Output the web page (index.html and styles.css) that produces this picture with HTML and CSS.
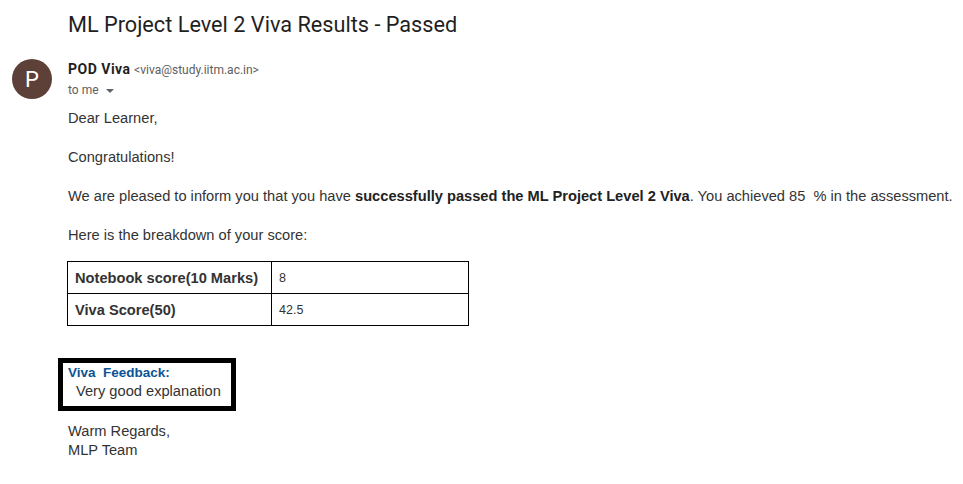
FILE: index.html
```html
<!DOCTYPE html>
<html>
<head>
<meta charset="utf-8">
<link rel="stylesheet" href="styles.css">
</head>
<body>
<div class="page">
  <h1 class="subject">ML Project Level 2 Viva Results - Passed</h1>
  <div class="header">
    <div class="avatar">P</div>
    <div class="meta">
      <div class="from"><span class="name">POD Viva</span> <span class="addr">&lt;viva@study.iitm.ac.in&gt;</span></div>
      <div class="to">to me <svg class="caret" width="10" height="6" viewBox="0 0 10 6"><path d="M1 1 L5 5 L9 1 Z" fill="#5f6368"/></svg></div>
    </div>
  </div>
  <div class="body">
    <p>Dear Learner,</p>
    <p>Congratulations!</p>
    <p>We are pleased to inform you that you have <b>successfully passed the ML Project Level 2 Viva</b>. You achieved 85&nbsp; % in the assessment.</p>
    <p>Here is the breakdown of your score:</p>
    <table class="scores">
      <tr><th>Notebook score(10 Marks)</th><td>8</td></tr>
      <tr><th>Viva Score(50)</th><td>42.5</td></tr>
    </table>
    <div class="feedback">
      <div class="fb-title">Viva&nbsp; Feedback:</div>
      <div class="fb-text">Very good explanation</div>
    </div>
    <div class="sign">Warm Regards,<br>MLP Team</div>
  </div>
</div>
</body>
</html>
```
FILE: styles.css
```css
html, body { margin: 0; padding: 0; background: #fff; }
body { font-family: "Liberation Sans", Arial, sans-serif; color: #333; }
.page { padding: 0 0 0 12px; }
.subject {
  margin: 0;
  padding: 11px 0 0 56px;
  font-family: Roboto, "Liberation Sans", sans-serif;
  font-weight: 400;
  font-size: 21.7px;
  line-height: 28px;
  color: #1f1f1f;
}
.header { display: flex; margin-top: 20px; }
.avatar {
  width: 40px; height: 40px; border-radius: 50%;
  background: #5d4037; color: #fff;
  font-family: Roboto, sans-serif; font-size: 22px;
  display: flex; align-items: center; justify-content: center;
  flex: none;
}
.meta { margin-left: 16px; margin-top: 1px; }
.from { font-family: Roboto, sans-serif; font-size: 14px; line-height: 18px; }
.name { font-weight: 700; color: #1f1f1f; letter-spacing: 0.5px; }
.addr { font-size: 12px; color: #5e5e5e; }
.to { font-family: Roboto, sans-serif; font-size: 12px; color: #5e5e5e; line-height: 18px; margin-top: 2px; display: flex; align-items: center; gap: 6px; }
.caret { margin-top: 1px; }
.body { margin-left: 56px; margin-top: 10px; font-size: 14.65px; line-height: 18px; color: #333; }
.body p { margin: 0 0 21px 0; }
.body b { color: #222; }
.scores {
  border-collapse: collapse;
  width: 402px;
  margin-top: -4px;
  margin-left: -1px;
}
.scores th, .scores td {
  border: 1px solid #000;
  height: 31px;
  padding: 0 7px;
  text-align: left;
  vertical-align: middle;
}
.scores th { font-size: 14.65px; font-weight: 700; width: 189px; color: #333; }
.scores td { font-size: 12.5px; color: #333; }
.feedback {
  display: inline-block;
  border: 5px solid #000;
  margin-top: 32px;
  margin-left: -10px;
  padding: 2px 10px 5px 5px;
}
.fb-title { color: #0b5394; font-weight: 700; font-size: 13.5px; line-height: 16px; }
.fb-text { font-size: 14.65px; line-height: 20px; padding-left: 8px; color: #333; }
.sign { margin-top: 11px; line-height: 19px; }
```
